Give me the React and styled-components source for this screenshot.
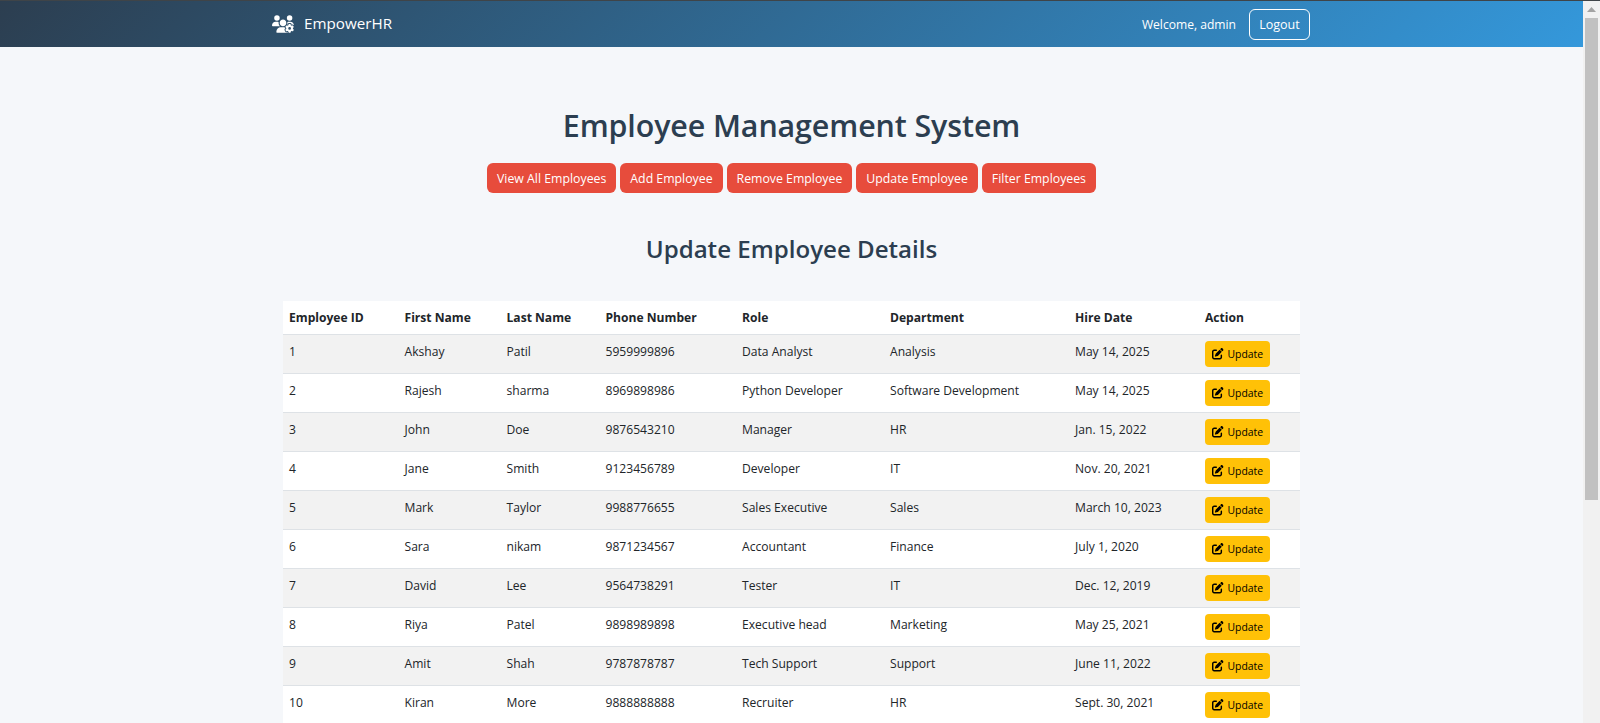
import React from "react";
import styled, { createGlobalStyle } from "styled-components";
import { FaPenToSquare, FaUsersGear } from "react-icons/fa6";

const Global = createGlobalStyle`
  html, body { margin: 0; padding: 0; height: 100%; overflow: hidden; }
  body { font-family: "Open Sans", "Noto Sans", sans-serif; background: #f5f7fa; color: #212529; }
`;

const Frame = styled.div`
  display: flex;
  height: 723px;
  border-top: 1px solid #3f4448;
  box-sizing: border-box;
  overflow: hidden;
`;
const Page = styled.div`
  flex: 1;
  min-width: 0;
  overflow: hidden;
`;
const ScrollTrack = styled.div`
  width: 17px;
  flex: none;
  background: #f1f1f1;
  display: flex;
  flex-direction: column;
  align-items: center;
`;
const ScrollArrow = styled.div`
  height: 17px;
  display: flex;
  align-items: center;
  justify-content: center;
`;
const ScrollThumb = styled.div`
  width: 13px;
  height: 482px;
  background: #c1c1c1;
`;
const Navbar = styled.nav`
  height: 46px;
  background: linear-gradient(135deg, #2c3e50, #3498db);
  color: #fff;
`;
const NavInner = styled.div`
  width: 1038px;
  height: 100%;
  margin-left: 272px;
  display: flex;
  align-items: center;
  justify-content: space-between;
`;
const Brand = styled.div`
  display: flex;
  align-items: center;
  gap: 10px;
  font-size: 15.2px;
  line-height: 1;
`;
const NavRight = styled.div`
  display: flex;
  align-items: center;
  gap: 13px;
  font-size: 12.1px;
`;
const Logout = styled.button`
  width: 61px;
  height: 31px;
  padding: 0;
  margin-top: 1px;
  border: 1px solid #fff;
  border-radius: 6px;
  background: transparent;
  color: #fff;
  font: inherit;
  font-size: 12.5px;
`;
const Main = styled.main`
  width: 1018px;
  margin: 0 auto;
  padding-top: 57px;
`;
const Title = styled.h1`
  margin: 0;
  text-align: center;
  font-size: 30.4px;
  line-height: 44px;
  font-weight: 600;
  letter-spacing: -0.1px;
  color: #2c3e50;
`;
const Actions = styled.div`
  display: flex;
  justify-content: center;
  gap: 4px;
  margin-top: 15px;
`;
const ActionButton = styled.button`
  height: 30px;
  padding: 0 10px;
  border: 0;
  border-radius: 6px;
  background: #e74c3c;
  color: #fff;
  font: inherit;
  font-size: 12.3px;
`;
const Subtitle = styled.h2`
  margin: 38px 0 0;
  text-align: center;
  font-size: 24.1px;
  line-height: 36px;
  font-weight: 600;
  color: #2c3e50;
`;
const Table = styled.table`
  width: 1017px;
  margin-top: 34px;
  border-collapse: collapse;
  table-layout: fixed;
  background: #fff;
  font-size: 12.1px;
`;
const HeadCell = styled.th`
  height: 33px;
  padding: 0 6.5px;
  text-align: left;
  font-weight: 700;
  color: #212529;
  border-bottom: 1px solid #dee2e6;
`;
const Row = styled.tr`
  background: ${(p) => (p.$odd ? "#f2f2f2" : "#fff")};
`;
const Cell = styled.td`
  height: 39px;
  padding: 0 6.5px 5px;
  box-sizing: border-box;
  color: #212529;
  border-bottom: 1px solid #dee2e6;
  white-space: nowrap;
`;
const ActionCell = styled(Cell)`
  padding-bottom: 0;
`;
const UpdateButton = styled.button`
  display: inline-flex;
  align-items: center;
  gap: 4px;
  width: 65px;
  height: 25.6px;
  padding: 0 0 0 7px;
  border: 0;
  border-radius: 4px;
  background: #ffc107;
  color: #000;
  font: inherit;
  font-size: 10.4px;
  svg { width: 11.5px; height: 11.5px; flex: none; }
`;

const columns = [115.5, 102, 99, 136.5, 148, 185, 130, 101];
const heads = ["Employee ID", "First Name", "Last Name", "Phone Number", "Role", "Department", "Hire Date", "Action"];
const rows = [
  [1, "Akshay", "Patil", "5959999896", "Data Analyst", "Analysis", "May 14, 2025"],
  [2, "Rajesh", "sharma", "8969898986", "Python Developer", "Software Development", "May 14, 2025"],
  [3, "John", "Doe", "9876543210", "Manager", "HR", "Jan. 15, 2022"],
  [4, "Jane", "Smith", "9123456789", "Developer", "IT", "Nov. 20, 2021"],
  [5, "Mark", "Taylor", "9988776655", "Sales Executive", "Sales", "March 10, 2023"],
  [6, "Sara", "nikam", "9871234567", "Accountant", "Finance", "July 1, 2020"],
  [7, "David", "Lee", "9564738291", "Tester", "IT", "Dec. 12, 2019"],
  [8, "Riya", "Patel", "9898989898", "Executive head", "Marketing", "May 25, 2021"],
  [9, "Amit", "Shah", "9787878787", "Tech Support", "Support", "June 11, 2022"],
  [10, "Kiran", "More", "9888888888", "Recruiter", "HR", "Sept. 30, 2021"],
];
const actions = ["View All Employees", "Add Employee", "Remove Employee", "Update Employee", "Filter Employees"];

export default function App() {
  return (
    <>
      <Global />
      <Frame>
        <Page>
          <Navbar>
            <NavInner>
              <Brand>
                <FaUsersGear size={22} />
                EmpowerHR
              </Brand>
              <NavRight>
                <span>Welcome, admin</span>
                <Logout>Logout</Logout>
              </NavRight>
            </NavInner>
          </Navbar>
          <Main>
            <Title>Employee Management System</Title>
            <Actions>
              {actions.map((a) => (
                <ActionButton key={a}>{a}</ActionButton>
              ))}
            </Actions>
            <Subtitle>Update Employee Details</Subtitle>
            <Table>
              <colgroup>
                {columns.map((w, i) => (
                  <col key={i} width={w} />
                ))}
              </colgroup>
              <thead>
                <tr>
                  {heads.map((h) => (
                    <HeadCell key={h}>{h}</HeadCell>
                  ))}
                </tr>
              </thead>
              <tbody>
                {rows.map((r, i) => (
                  <Row key={r[0]} $odd={i % 2 === 0}>
                    {r.map((c, j) => (
                      <Cell key={j}>{c}</Cell>
                    ))}
                    <ActionCell>
                      <UpdateButton>
                        <FaPenToSquare />
                        Update
                      </UpdateButton>
                    </ActionCell>
                  </Row>
                ))}
              </tbody>
            </Table>
          </Main>
        </Page>
        <ScrollTrack>
          <ScrollArrow>
            <svg width="9" height="5" viewBox="0 0 9 5"><path d="M4.5 0L9 5H0z" fill="#a3a3a3" /></svg>
          </ScrollArrow>
          <ScrollThumb />
        </ScrollTrack>
      </Frame>
    </>
  );
}
